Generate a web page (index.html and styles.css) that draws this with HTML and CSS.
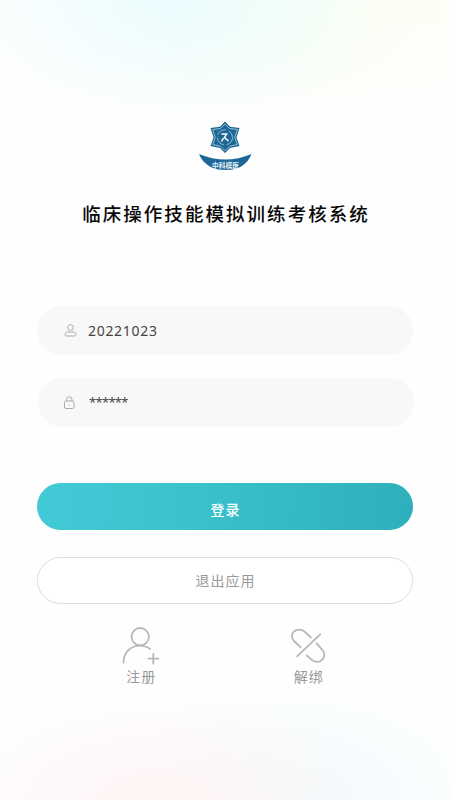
FILE: index.html
```html
<!DOCTYPE html>
<html lang="zh-CN">
<head>
<meta charset="utf-8">
<title>临床操作技能模拟训练考核系统</title>
<link rel="stylesheet" href="styles.css">
</head>
<body>
<main class="login">
  <svg class="logo" viewBox="0 0 54 54" aria-hidden="true">
    <path class="logo-fill" d="M26 1.500l5 5.200 9.500 1.300-3 9.500 3 8.500-9.500 2-5 5-5-5-9.500-2 3-8.500-3-9.500L21 6.700z"/>
    <path class="logo-line" d="M26 4l4.500 4.500 7.800 1-2.500 8 2.500 7-7.800 1.800-4.500 4.500-4.500-4.500-7.800-1.800 2.500-7-2.500-8 7.800-1z"/>
    <circle class="logo-ring" cx="26" cy="17.300" r="7.500"/>
    <path class="logo-mark" d="M22.500 14h6M27.500 14l-2 3.500 4 3.500M24.500 18l-2 3.500"/>
    <path class="logo-fill" d="M0 34Q26.500 45 52.500 34Q50 41 43 46Q37 50 26.500 50T10 46Q2.500 41 0 34z"/>
    <text class="logo-text" x="26.500" y="47.800" text-anchor="middle" textLength="27" lengthAdjust="spacingAndGlyphs">中科模医</text>
  </svg>
  <h1 class="title">临床操作技能模拟训练考核系统</h1>
  <form class="form">
    <label class="field">
      <svg class="field-icon" viewBox="0 0 14 14"><circle cx="7.500" cy="3.500" r="2.800"/><path d="M4.500 8h6c1.500 0 2.500 1.200 2.500 2.500 0 1-.7 1.500-1.500 1.500h-8C2.500 12 2 11.500 2 10.500 2 9.200 3 8 4.500 8z"/></svg>
      <span class="value">20221023</span>
    </label>
    <label class="field field-password">
      <svg class="field-icon" viewBox="0 0 14 14"><rect x="1.500" y="5" width="9.500" height="7.500" rx="1.500"/><path d="M3.500 5V3.500a2.700 2.700 0 0 1 5.500 0V5M6.250 8.500v1"/></svg>
      <span class="value">******</span>
    </label>
    <button class="btn btn-primary" type="button">登录</button>
    <button class="btn btn-outline" type="button">退出应用</button>
  </form>
  <nav class="actions">
    <a class="action">
      <svg class="action-icon" viewBox="0 0 40 40"><circle cx="19.200" cy="11.700" r="8.700"/><path d="M2.500 37.500C2.500 27 10 20.700 19 20.700c4 0 7.300 1.200 10.200 3.400M32.300 28.700v10M27.300 33.700h10"/></svg>
      <span class="action-label">注册</span>
    </a>
    <a class="action">
      <svg class="action-icon" viewBox="0 0 40 40"><path d="M11.700 22.300L5.500 16.500C2 13.200 2.200 9 5 6.500S12.500 3.800 15.500 6.500L22 12.700M8 31.300L31.300 9.300M17.700 30.300L23 35c3.300 2.600 7.300 2.300 10-.2s3.400-6.700.3-10L27.700 18.300"/></svg>
      <span class="action-label">解绑</span>
    </a>
  </nav>
</main>
</body>
</html>
```
FILE: styles.css
```css
* { box-sizing: border-box; }
body {
  margin: 0;
  font-family: "Noto Sans", "Noto Sans CJK SC", sans-serif;
}
.login {
  width: 450px;
  height: 800px;
  padding: 120px 37px 0 37px;
  display: flex;
  flex-direction: column;
  align-items: center;
  overflow: hidden;
  background:
    radial-gradient(ellipse 210px 120px at 170px 0, #ebfcfe, transparent),
    radial-gradient(ellipse 200px 125px at 270px 0, #f7fff4, transparent),
    radial-gradient(ellipse 240px 115px at 390px 0, #fffef6, transparent),
    radial-gradient(ellipse 240px 110px at 170px 800px, #fff4f4, transparent),
    radial-gradient(ellipse 190px 115px at 300px 800px, #effbfe, transparent),
    #fefefe;
}
.logo { width: 54px; height: 54px; flex: none; margin-left: 1px; }
.logo-fill { fill: #1c6795; }
.logo-line, .logo-ring { fill: none; stroke: #b4d2e3; stroke-width: .8; }
.logo-ring { stroke-dasharray: 10 3; }
.logo-mark { fill: none; stroke: #fff; stroke-width: 1.500; }
.logo-text { fill: #e4f2fa; font: 700 7px "Noto Sans CJK SC", sans-serif; }
.title {
  margin: 25px 0 1px;
  height: 28px;
  font: 500 18.500px/28px "Noto Sans CJK SC", sans-serif;
  letter-spacing: 2.050px;
  white-space: nowrap;
  color: #080808;
  padding-left: 2px;
}
.form {
  width: 100%;
  margin-top: 78px;
  display: flex;
  flex-direction: column;
}
.field {
  height: 49px;
  border-radius: 25px;
  background: #f8f8f8;
  display: flex;
  align-items: center;
  padding-left: 26px;
  gap: 11px;
}
.field-password {
  margin: 23px -1px 0 1px;
  padding-left: 25px;
  gap: 12px;
}
.field-icon {
  width: 14px;
  height: 14px;
  fill: none;
  stroke: #aaa;
  stroke-width: 1;
}
.value {
  font-size: 14px;
  line-height: 20px;
  letter-spacing: .7px;
  color: #444;
}
.field-password .value {
  padding-bottom: 2px;
  font-size: 13px;
  letter-spacing: -.7px;
}
.btn {
  height: 47px;
  border-radius: 24px;
  padding: 0;
  font-family: "Noto Sans CJK SC", sans-serif;
  font-size: 14px;
  letter-spacing: 1px;
}
.btn-primary {
  margin-top: 56px;
  padding: 4px 0 0 1px;
  border: 0;
  font-weight: 500;
  color: #fff;
  background: linear-gradient(100deg, #42cbd7, #38bfca 50%, #2eafbc);
}
.btn-outline {
  margin-top: 27px;
  padding: 0 0 1px 1px;
  border: 1px solid #ddd;
  color: #999;
  background: #fff;
}
.actions {
  margin-top: 21px;
  width: 335px;
  display: grid;
  grid-template-columns: 1fr 1fr;
}
.action {
  display: flex;
  flex-direction: column;
  align-items: center;
}
.action-icon {
  width: 40px;
  height: 40px;
  fill: none;
  stroke: #b8b8b8;
  stroke-width: 1.800;
  stroke-linecap: round;
}
.action-label {
  margin-top: 1px;
  font: 14px/20px "Noto Sans CJK SC", sans-serif;
  letter-spacing: 1px;
  color: #999;
}
```
